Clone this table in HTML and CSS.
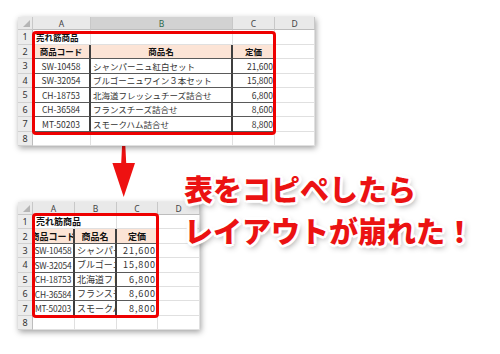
FILE: index.html
```html
<!DOCTYPE html>
<html lang="ja">
<head>
<meta charset="utf-8">
<title>表をコピペしたらレイアウトが崩れた</title>
<link rel="stylesheet" href="styles.css">
</head>
<body>
<div class="page">
  <div class="sheet sheet-top">
    <div class="corner"></div>
    <div class="hd">A</div><div class="hd sel">B</div><div class="hd">C</div><div class="hd">D</div>

    <div class="rn">1</div><div class="c title">売れ筋商品</div><div class="c"></div><div class="c"></div><div class="c"></div>
    <div class="rn">2</div><div class="c th ctr tb tv">商品コード</div><div class="c th ctr tb tv">商品名</div><div class="c th ctr tb">定価</div><div class="c"></div>
    <div class="rn">3</div><div class="c ctr tb tv">SW-10458</div><div class="c tb tv">シャンパーニュ紅白セット</div><div class="c rt tb">21,600</div><div class="c"></div>
    <div class="rn">4</div><div class="c ctr tb tv">SW-32054</div><div class="c tb tv">ブルゴーニュワイン３本セット</div><div class="c rt tb">15,800</div><div class="c"></div>
    <div class="rn">5</div><div class="c ctr tb tv">CH-18753</div><div class="c tb tv">北海道フレッシュチーズ詰合せ</div><div class="c rt tb">6,800</div><div class="c"></div>
    <div class="rn">6</div><div class="c ctr tb tv">CH-36584</div><div class="c tb tv">フランスチーズ詰合せ</div><div class="c rt tb">8,600</div><div class="c"></div>
    <div class="rn">7</div><div class="c ctr tb tv">MT-50203</div><div class="c tb tv">スモークハム詰合せ</div><div class="c rt tb">8,800</div><div class="c"></div>
    <div class="rn">8</div><div class="c"></div><div class="c"></div><div class="c"></div><div class="c"></div>
    <div class="box box-top"></div>
  </div>

  <svg class="arrow" width="30" height="56" viewBox="0 0 30 56">
    <polygon points="13.2,1 16.2,1 17.2,21 26,21 14.7,55 3.4,21 12.2,21" fill="#ee1111"/>
  </svg>

  <div class="sheet sheet-bottom">
    <div class="corner"></div>
    <div class="hd">A</div><div class="hd">B</div><div class="hd">C</div><div class="hd">D</div>

    <div class="rn">1</div><div class="c title spill">売れ筋商品</div><div class="c"></div><div class="c"></div><div class="c"></div>
    <div class="rn">2</div><div class="c th ctr tb tv">商品コード</div><div class="c th ctr tb tv">商品名</div><div class="c th ctr tb">定価</div><div class="c"></div>
    <div class="rn">3</div><div class="c ctr tb tv code">SW-10458</div><div class="c tb tv">シャンパーニュ紅白セット</div><div class="c rt tb num">21,600</div><div class="c"></div>
    <div class="rn">4</div><div class="c ctr tb tv code">SW-32054</div><div class="c tb tv">ブルゴーニュワイン３本セット</div><div class="c rt tb num">15,800</div><div class="c"></div>
    <div class="rn">5</div><div class="c ctr tb tv code">CH-18753</div><div class="c tb tv">北海道フレッシュチーズ詰合せ</div><div class="c rt tb num">6,800</div><div class="c"></div>
    <div class="rn">6</div><div class="c ctr tb tv code">CH-36584</div><div class="c tb tv">フランスチーズ詰合せ</div><div class="c rt tb num">8,600</div><div class="c"></div>
    <div class="rn">7</div><div class="c ctr tb tv code">MT-50203</div><div class="c tb tv">スモークハム詰合せ</div><div class="c rt tb num">8,800</div><div class="c"></div>
    <div class="rn">8</div><div class="c"></div><div class="c"></div><div class="c"></div><div class="c"></div>
    <div class="box box-bottom"></div>
  </div>

  <div class="caption">
    <div class="line">表をコピペしたら</div>
    <div class="line">レイアウトが崩れた！</div>
  </div>
</div>
</body>
</html>
```

FILE: styles.css
```css
* { box-sizing: border-box; }

html, body {
  margin: 0;
  padding: 0;
  background: #ffffff;
}

.page {
  position: relative;
  width: 500px;
  height: 354px;
  padding: 17px 0 0 18px;
  font-family: "Noto Sans CJK JP", "Noto Sans", sans-serif;
  color: #333;
}

.sheet {
  position: relative;
  display: grid;
  width: fit-content;
  background: #fff;
  box-shadow: 1px 2px 6px rgba(0, 0, 0, 0.38);
}

.sheet-top {
  grid-template-columns: 15px 58px 142px 42px 40px;
  grid-template-rows: 13px repeat(8, 14.5px);
  font-size: 8.5px;
}

.sheet-bottom {
  margin-top: 4px;
  grid-template-columns: 15px 42px 42px 41px 42px;
  grid-template-rows: 13px repeat(8, 14.4px);
  font-size: 9px;
}

.corner {
  position: relative;
  background: #e9e9e9;
  border-right: 1px solid #c8c8c8;
  border-bottom: 1px solid #c8c8c8;
}
.corner::after {
  content: "";
  position: absolute;
  right: 2px;
  bottom: 2px;
  width: 0;
  height: 0;
  border-left: 7px solid transparent;
  border-bottom: 7px solid #b5b5b5;
}

.hd {
  display: flex;
  align-items: center;
  justify-content: center;
  background: #e9e9e9;
  border-right: 1px solid #c8c8c8;
  border-bottom: 1px solid #bdbdbd;
  font-family: "Noto Sans", sans-serif;
  font-size: 8.5px;
  color: #444;
}
.hd.sel {
  background: #d2d2d2;
  color: #2c6a4c;
}

.rn {
  display: flex;
  align-items: center;
  justify-content: center;
  background: #ececec;
  border-right: 1px solid #bdbdbd;
  border-bottom: 1px solid #d0d0d0;
  font-family: "Noto Sans", sans-serif;
  font-size: 9px;
  color: #333;
}

.c {
  display: flex;
  align-items: center;
  padding: 0 2px;
  overflow: hidden;
  white-space: nowrap;
  border-right: 1px solid #e0e0e0;
  border-bottom: 1px solid #e0e0e0;
}

.c.ctr { justify-content: center; padding: 0; }
.c.rt { justify-content: flex-end; padding-right: 1px; }

.c.title {
  font-weight: 700;
  color: #111;
  padding-left: 3px;
}
.c.spill {
  overflow: visible;
  position: relative;
  z-index: 1;
}

.c.th {
  background: #fce4d6;
  font-weight: 700;
  color: #111;
}

.c.tb { border-bottom: 1px solid #5a5a5a; }
.c.tv { border-right: 2px solid #3f3f3f; }

.c.code { font-size: 8.4px; letter-spacing: -0.15px; }
.c.num { letter-spacing: 0.9px; }

.box {
  position: absolute;
  border: 3px solid #ee0000;
  border-radius: 4px;
  z-index: 2;
}
.box-top {
  left: 14px;
  top: 14px;
  width: 244px;
  height: 104px;
}
.box-bottom {
  left: 14px;
  top: 11px;
  width: 127px;
  height: 105px;
}

.arrow {
  display: block;
  margin: -4px 0 0 91px;
}

.caption {
  position: absolute;
  left: 184px;
  top: 167px;
  font-family: "Noto Sans CJK JP", sans-serif;
  font-weight: 900;
  font-size: 29px;
  line-height: 42px;
  color: #eb1212;
  white-space: nowrap;
  z-index: 3;
  text-shadow:
    2px 0 0 #fff, -2px 0 0 #fff, 0 2px 0 #fff, 0 -2px 0 #fff,
    2px 2px 0 #fff, -2px -2px 0 #fff, 2px -2px 0 #fff, -2px 2px 0 #fff,
    3px 0 1px #fff, -3px 0 1px #fff, 0 3px 1px #fff, 0 -3px 1px #fff,
    2px 3px 6px rgba(0, 0, 0, 0.45);
}
```
